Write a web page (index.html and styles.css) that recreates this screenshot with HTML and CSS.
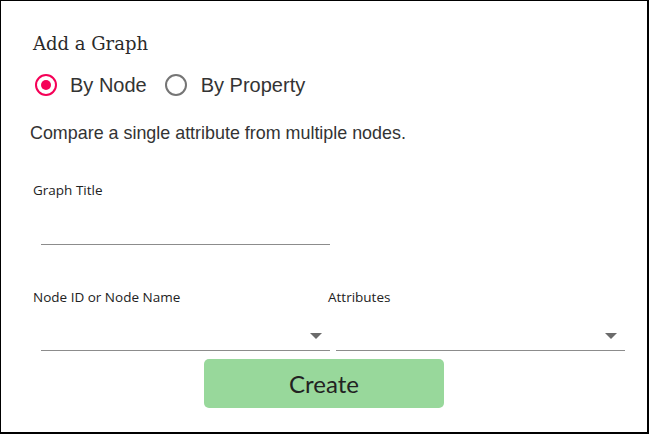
FILE: index.html
```html
<!DOCTYPE html>
<html>
<head>
<meta charset="utf-8">
<link rel="stylesheet" href="styles.css">
</head>
<body>
<div class="frame">
  <h2 class="title">Add a Graph</h2>
  <div class="radios">
    <label class="radio checked"><span class="dot"></span><span class="rlabel">By Node</span></label>
    <label class="radio"><span class="dot"></span><span class="rlabel">By Property</span></label>
  </div>
  <p class="desc">Compare a single attribute from multiple nodes.</p>
  <div class="field single">
    <div class="flabel">Graph Title</div>
    <div class="input"></div>
  </div>
  <div class="row">
    <div class="field">
      <div class="flabel">Node ID or Node Name</div>
      <div class="input select"><span class="arrow"></span></div>
    </div>
    <div class="field">
      <div class="flabel">Attributes</div>
      <div class="input select"><span class="arrow"></span></div>
    </div>
  </div>
  <div class="actions">
    <button class="create">Create</button>
  </div>
</div>
</body>
</html>
```

FILE: styles.css
```css
html, body {
  margin: 0;
  padding: 0;
  background: #fff;
}
.frame {
  box-sizing: border-box;
  width: 649px;
  height: 434px;
  border: 1px solid #000;
  border-right-width: 2px;
  border-bottom-width: 2px;
  padding: 31px 0 0 28px;
  font-family: "Liberation Sans", Arial, sans-serif;
  color: #333;
}
.title {
  margin: 0 0 0 4px;
  font-family: "DejaVu Serif", serif;
  font-weight: normal;
  font-size: 18px;
  line-height: 24px;
  color: #2a2a2a;
}
.radios {
  display: flex;
  align-items: center;
  margin-top: 11px;
  height: 36px;
}
.radio {
  display: flex;
  align-items: center;
  margin-left: 6px;
}
.radio + .radio {
  margin-left: 18px;
}
.dot {
  box-sizing: border-box;
  width: 22px;
  height: 22px;
  border-radius: 50%;
  border: 2px solid #757575;
  position: relative;
}
.radio.checked .dot {
  border-color: #f50057;
}
.radio.checked .dot::after {
  content: "";
  position: absolute;
  left: 4px;
  top: 4px;
  width: 10px;
  height: 10px;
  border-radius: 50%;
  background: #f50057;
}
.rlabel {
  margin-left: 13px;
  font-size: 20px;
  color: #333;
}
.radio + .radio .rlabel {
  margin-left: 14px;
}
.desc {
  margin: 19px 0 0 1px;
  font-size: 17.9px;
  line-height: 22px;
  color: #333;
}
.field {
  width: 297px;
  padding-left: 4px;
  box-sizing: border-box;
}
.field.single {
  margin-top: 37px;
}
.flabel {
  font-family: "Open Sans", "Lato", sans-serif;
  font-size: 13.5px;
  line-height: 18px;
  color: #222;
}
.input {
  position: relative;
  margin-left: 8px;
  width: 289px;
  height: 36px;
  border-bottom: 1px solid #8c8c8c;
}
.field.single .input {
  margin-top: 9px;
}
.row {
  display: flex;
  margin-top: 43px;
}
.row .field + .field {
  margin-left: -2px;
}
.row .input {
  margin-top: 8px;
}
.arrow {
  position: absolute;
  right: 8px;
  top: 19px;
  width: 0;
  height: 0;
  border-left: 6px solid transparent;
  border-right: 6px solid transparent;
  border-top: 6px solid #6b6b6b;
}
.actions {
  display: flex;
  justify-content: center;
  margin-top: 8px;
  padding-right: 28px;
}
.create {
  margin-left: 0;
  width: 240px;
  height: 49px;
  border: none;
  border-radius: 5px;
  background: #98d89b;
  font-family: "Lato", "Open Sans", sans-serif;
  font-size: 24px;
  color: #222;
}
```
